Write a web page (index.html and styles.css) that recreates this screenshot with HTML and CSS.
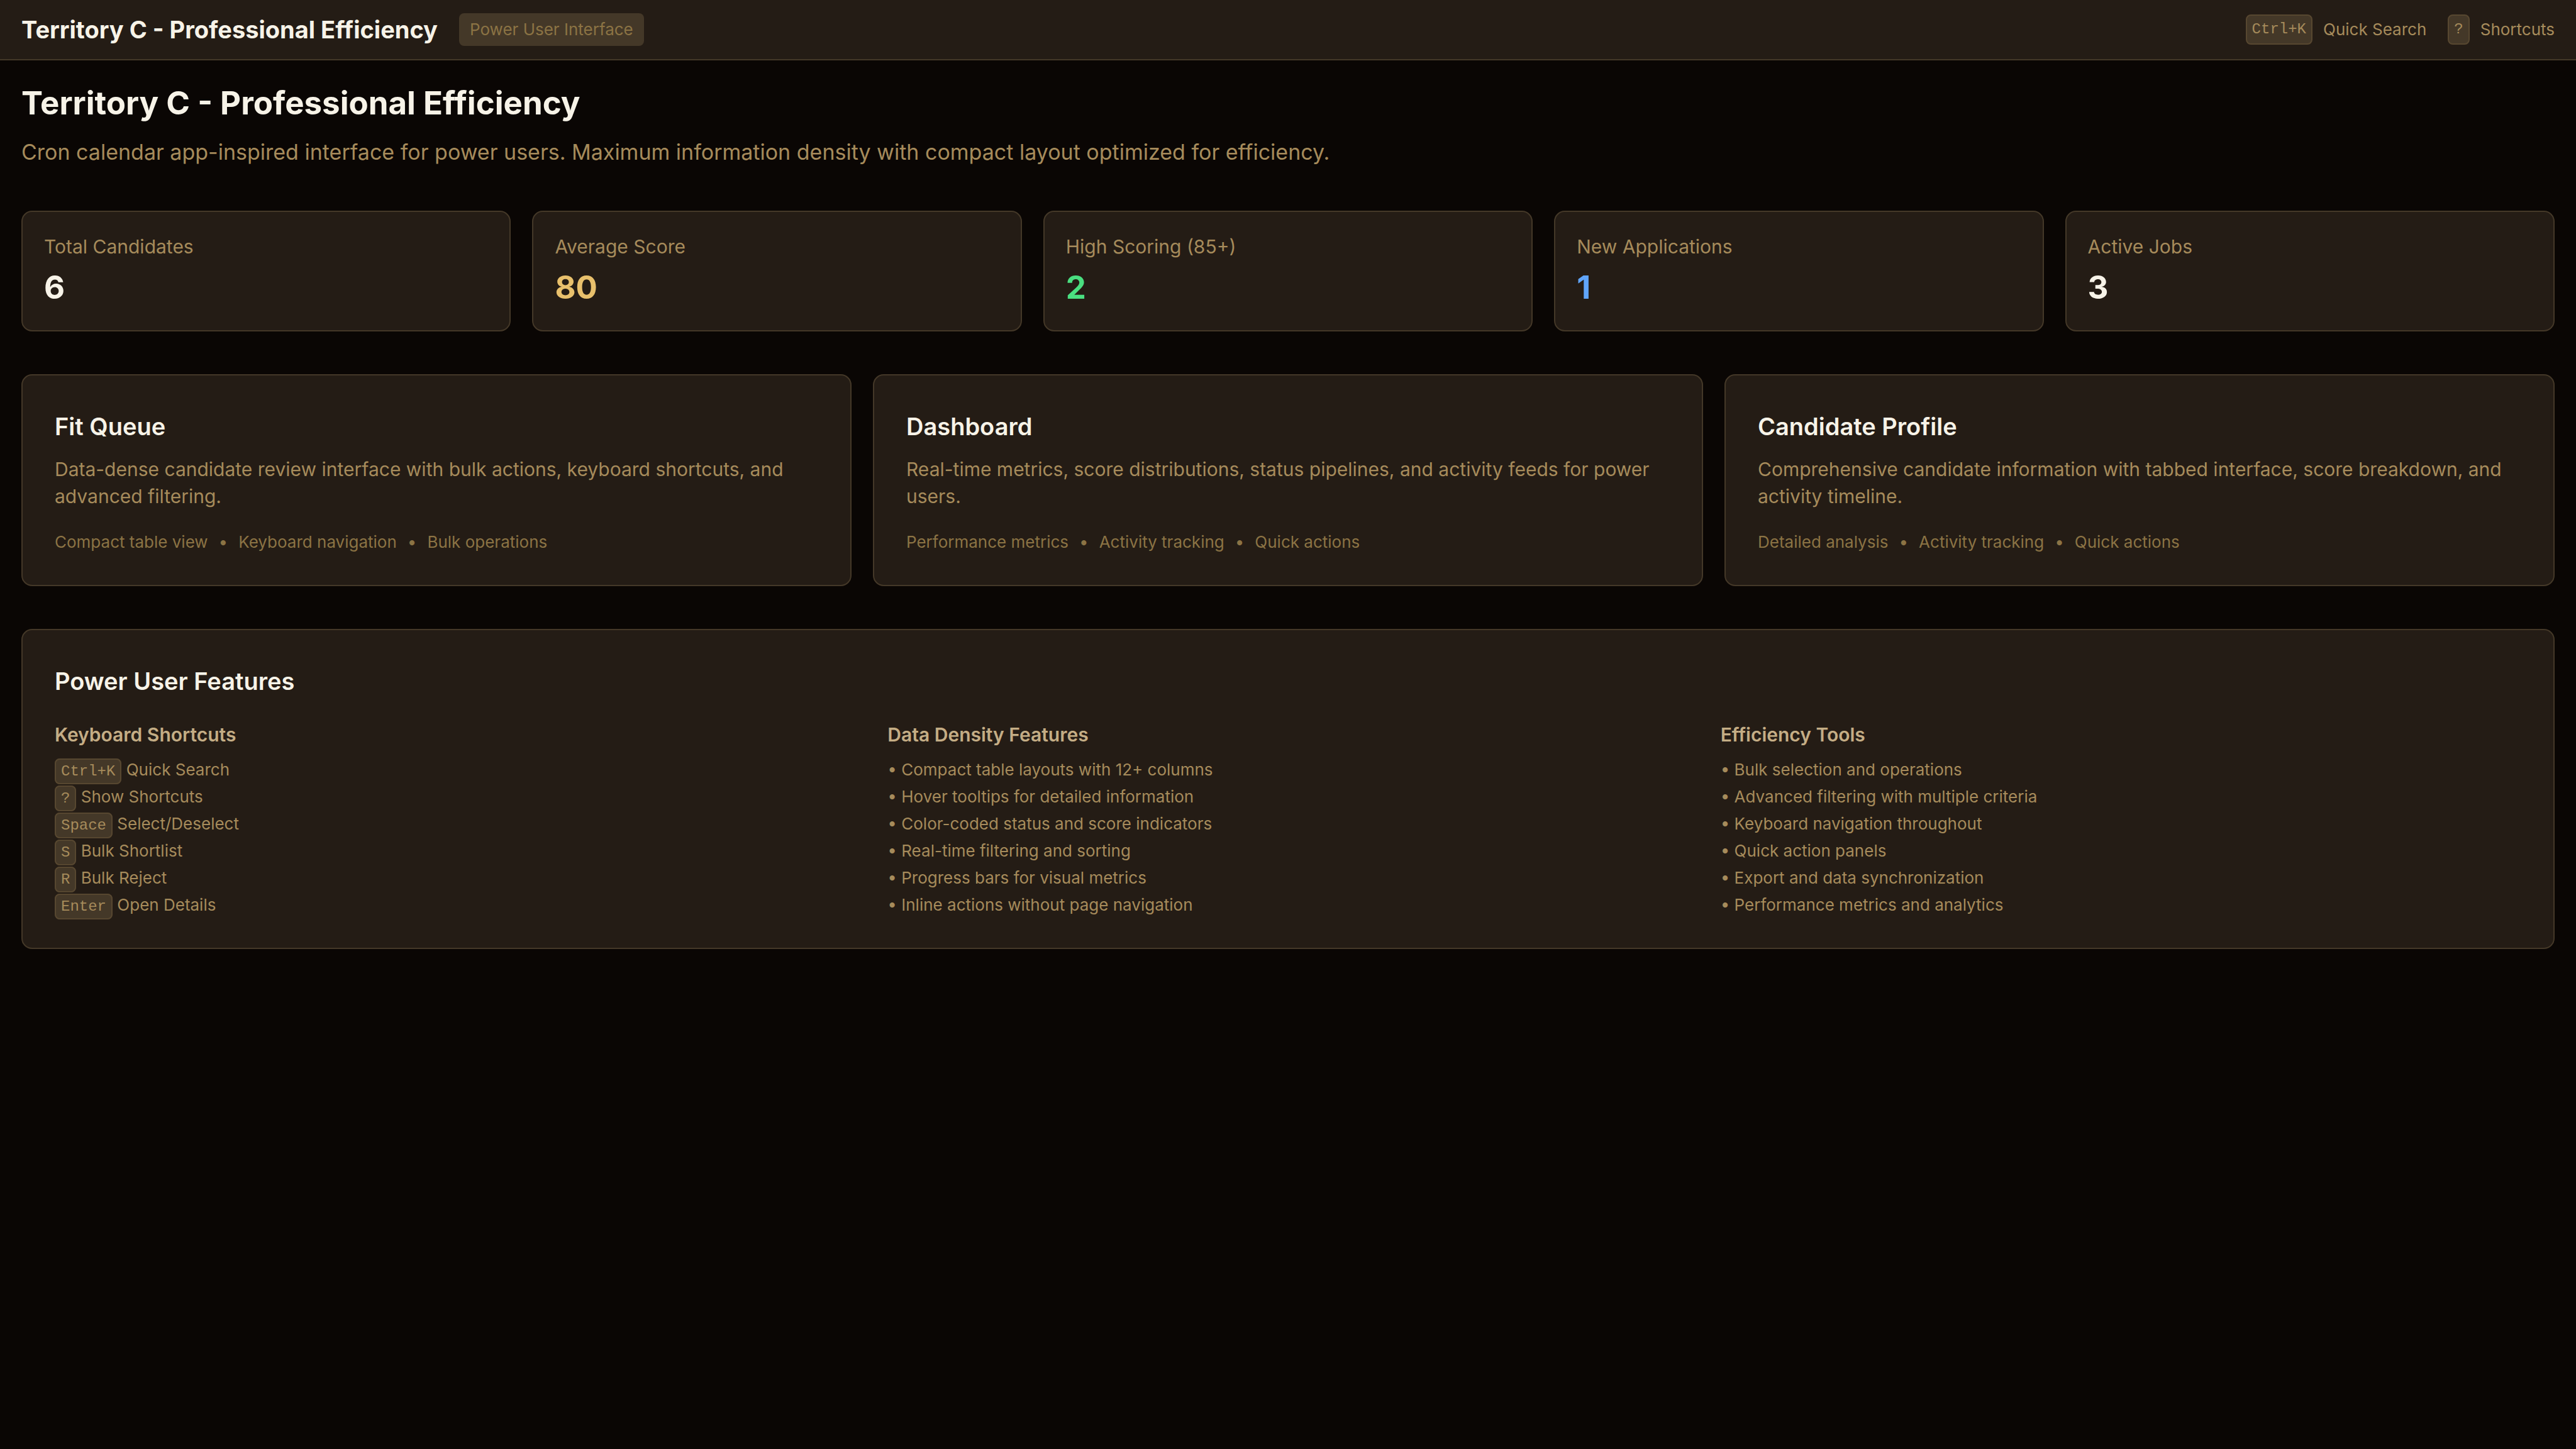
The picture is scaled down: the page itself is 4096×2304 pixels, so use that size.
FILE: index.html
```html
<!DOCTYPE html>
<html lang="en">
<head>
<meta charset="utf-8">
<title>Territory C - Professional Efficiency</title>
<link rel="stylesheet" href="styles.css">
</head>
<body>
<header class="topbar">
  <div class="brand">
    <span class="brand-title">Territory C - Professional Efficiency</span>
    <span class="badge">Power User Interface</span>
  </div>
  <div class="hints">
    <div class="hint"><kbd class="key">Ctrl+K</kbd><span>Quick Search</span></div>
    <div class="hint"><kbd class="key">?</kbd><span>Shortcuts</span></div>
  </div>
</header>
<main class="content">
  <section class="intro">
    <h1 class="page-title">Territory C - Professional Efficiency</h1>
    <p class="lead">Cron calendar app-inspired interface for power users. Maximum information density with compact layout optimized for efficiency.</p>
  </section>
  <section class="stats">
    <div class="card stat"><div class="stat-label">Total Candidates</div><div class="stat-value">6</div></div>
    <div class="card stat"><div class="stat-label">Average Score</div><div class="stat-value gold">80</div></div>
    <div class="card stat"><div class="stat-label">High Scoring (85+)</div><div class="stat-value green">2</div></div>
    <div class="card stat"><div class="stat-label">New Applications</div><div class="stat-value blue">1</div></div>
    <div class="card stat"><div class="stat-label">Active Jobs</div><div class="stat-value">3</div></div>
  </section>
  <section class="links">
    <a class="card link-card" href="#fit-queue">
      <h2 class="card-title">Fit Queue</h2>
      <p class="card-text">Data-dense candidate review interface with bulk actions, keyboard shortcuts, and advanced filtering.</p>
      <div class="tags"><span>Compact table view</span><span>•</span><span>Keyboard navigation</span><span>•</span><span>Bulk operations</span></div>
    </a>
    <a class="card link-card" href="#dashboard">
      <h2 class="card-title">Dashboard</h2>
      <p class="card-text">Real-time metrics, score distributions, status pipelines, and activity feeds for power users.</p>
      <div class="tags"><span>Performance metrics</span><span>•</span><span>Activity tracking</span><span>•</span><span>Quick actions</span></div>
    </a>
    <a class="card link-card" href="#candidate-profile">
      <h2 class="card-title">Candidate Profile</h2>
      <p class="card-text">Comprehensive candidate information with tabbed interface, score breakdown, and activity timeline.</p>
      <div class="tags"><span>Detailed analysis</span><span>•</span><span>Activity tracking</span><span>•</span><span>Quick actions</span></div>
    </a>
  </section>
  <section class="card features">
    <h2 class="card-title">Power User Features</h2>
    <div class="feature-grid">
      <div>
        <h3 class="feature-title">Keyboard Shortcuts</h3>
        <ul class="feature-list">
          <li><kbd class="key">Ctrl+K</kbd> Quick Search</li>
          <li><kbd class="key">?</kbd> Show Shortcuts</li>
          <li><kbd class="key">Space</kbd> Select/Deselect</li>
          <li><kbd class="key">S</kbd> Bulk Shortlist</li>
          <li><kbd class="key">R</kbd> Bulk Reject</li>
          <li><kbd class="key">Enter</kbd> Open Details</li>
        </ul>
      </div>
      <div>
        <h3 class="feature-title">Data Density Features</h3>
        <ul class="feature-list">
          <li>• Compact table layouts with 12+ columns</li>
          <li>• Hover tooltips for detailed information</li>
          <li>• Color-coded status and score indicators</li>
          <li>• Real-time filtering and sorting</li>
          <li>• Progress bars for visual metrics</li>
          <li>• Inline actions without page navigation</li>
        </ul>
      </div>
      <div>
        <h3 class="feature-title">Efficiency Tools</h3>
        <ul class="feature-list">
          <li>• Bulk selection and operations</li>
          <li>• Advanced filtering with multiple criteria</li>
          <li>• Keyboard navigation throughout</li>
          <li>• Quick action panels</li>
          <li>• Export and data synchronization</li>
          <li>• Performance metrics and analytics</li>
        </ul>
      </div>
    </div>
  </section>
</main>
</body>
</html>
```
FILE: styles.css
```css
:root {
  --bg: #0a0604;
  --surface: #241c15;
  --line: #443828;
  --line-strong: #574730;
  --text: #f7f3e8;
  --soft: #c4ad85;
  --muted: #a68b5b;
  --dim: #8b7344;
}

* { box-sizing: border-box; }

body {
  margin: 0;
  min-height: 100vh;
  background: var(--bg);
  color: var(--text);
  font-family: Inter, "Liberation Sans", sans-serif;
  font-size: 30px;
  line-height: 43px;
}

h1, h2, h3, p, ul { margin: 0; padding: 0; }

.topbar {
  display: flex;
  align-items: center;
  justify-content: space-between;
  padding: 17px 34px;
  background: var(--surface);
  border-bottom: 2px solid var(--line);
}

.brand { display: flex; align-items: center; gap: 34px; }

.brand-title { font-size: 38px; font-weight: 700; line-height: 60px; }

.badge {
  padding: 9px 17px;
  border-radius: 8px;
  background: var(--line);
  color: var(--dim);
  font-size: 26px;
  line-height: 34px;
}

.hints {
  display: flex;
  gap: 34px;
  color: var(--muted);
  font-size: 26px;
  line-height: 34px;
}

.hint { display: flex; align-items: center; gap: 17px; }

.key {
  padding: 5px 8px;
  border: 2px solid var(--line-strong);
  border-radius: 8px;
  background: var(--line);
  color: var(--muted);
  font-family: "Liberation Mono", monospace;
  font-size: 24px;
}

.content {
  display: flex;
  flex-direction: column;
  gap: 68px;
  padding: 34px;
}

.page-title { font-size: 51px; font-weight: 700; line-height: 68px; }

.lead {
  margin-top: 18px;
  color: var(--muted);
  font-size: 34px;
  line-height: 51px;
}

.card {
  background: var(--surface);
  border: 2px solid var(--line);
  border-radius: 17px;
}

.stats {
  display: grid;
  grid-template-columns: repeat(5, 1fr);
  gap: 34px;
}

.stat { padding: 34px; }

.stat-label { color: var(--muted); }

.stat-value {
  margin-top: 9px;
  font-size: 51px;
  font-weight: 700;
  line-height: 68px;
}

.gold { color: #e8c06c; }
.green { color: #4ade80; }
.blue { color: #60a5fa; }

.links {
  display: grid;
  grid-template-columns: repeat(3, 1fr);
  gap: 34px;
}

.link-card {
  padding: 51px;
  color: inherit;
  text-decoration: none;
}

.card-title { font-size: 38px; font-weight: 600; line-height: 60px; }

.card-text { margin-top: 17px; color: var(--muted); }

.tags {
  display: flex;
  gap: 17px;
  margin-top: 34px;
  color: var(--dim);
  font-size: 26px;
  line-height: 34px;
}

.features { padding: 51px; }

.feature-grid {
  display: grid;
  grid-template-columns: repeat(3, 1fr);
  gap: 51px;
  margin-top: 34px;
}

.feature-title {
  color: var(--soft);
  font-size: 30px;
  font-weight: 600;
  line-height: 43px;
}

.feature-list {
  display: flex;
  flex-direction: column;
  gap: 9px;
  margin-top: 17px;
  color: var(--muted);
  font-size: 26px;
  line-height: 34px;
  list-style: none;
}

.feature-list .key { line-height: 1; }
```
